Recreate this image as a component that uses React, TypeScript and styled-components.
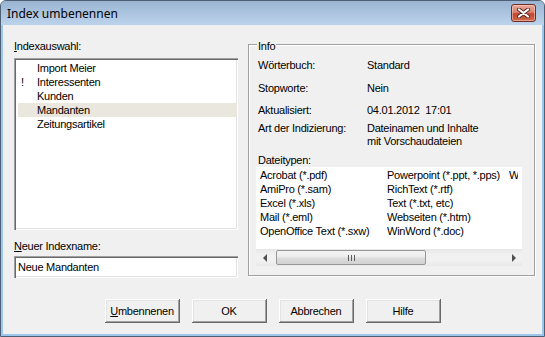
import React from 'react';
import styled, { createGlobalStyle } from 'styled-components';

const GlobalStyle = createGlobalStyle`
  html, body {
    margin: 0;
    padding: 0;
    background: #fff;
  }
  body {
    font-family: "Liberation Sans", Arial, sans-serif;
    font-size: 11px;
    letter-spacing: -0.25px;
    color: #000;
  }
`;

const indexes = [
  { name: 'Import Meier' },
  { name: 'Interessenten', flag: '!' },
  { name: 'Kunden' },
  { name: 'Mandanten', selected: true },
  { name: 'Zeitungsartikel' },
];

const fileTypes = [
  'Acrobat (*.pdf)',
  'AmiPro (*.sam)',
  'Excel (*.xls)',
  'Mail (*.eml)',
  'OpenOffice Text (*.sxw)',
  'Powerpoint (*.ppt, *.pps)',
  'RichText (*.rtf)',
  'Text (*.txt, etc)',
  'Webseiten (*.htm)',
  'WinWord (*.doc)',
  'W',
];

export default function App() {
  return (
    <>
      <GlobalStyle />
      <Window>
        <TitleBar>
          <Title>Index umbenennen</Title>
          <CloseButton>
            <svg width='13' height='10' viewBox='0 0 13 10'>
              <path d='M2 1.5 L11 8.5 M11 1.5 L2 8.5' stroke='#5a2a24' strokeWidth='4' strokeLinecap='round' />
              <path d='M2 1.5 L11 8.5 M11 1.5 L2 8.5' stroke='#fff' strokeWidth='2.2' strokeLinecap='round' />
            </svg>
          </CloseButton>
        </TitleBar>
        <Client>
          <Main>
            <LeftColumn>
              <FieldLabel><u>I</u>ndexauswahl:</FieldLabel>
              <ListBox>
                {indexes.map((item) => (
                  <ListRow key={item.name} $selected={!!item.selected}>
                    <Marker>{item.flag}</Marker>
                    {item.name}
                  </ListRow>
                ))}
              </ListBox>
              <FieldLabel $top={10}><u>N</u>euer Indexname:</FieldLabel>
              <NameInput defaultValue='Neue Mandanten' />
            </LeftColumn>
            <GroupBox>
              <Legend>Info</Legend>
              <InfoRow $top={0}>
                <span>Wörterbuch:</span>
                <span>Standard</span>
              </InfoRow>
              <InfoRow $top={10}>
                <span>Stopworte:</span>
                <span>Nein</span>
              </InfoRow>
              <InfoRow $top={9}>
                <span>Aktualisiert:</span>
                <span>04.01.2012&nbsp;&nbsp;17:01</span>
              </InfoRow>
              <InfoRow $top={5}>
                <span>Art der Indizierung:</span>
                <span>
                  Dateinamen und Inhalte
                  <br />
                  mit Vorschaudateien
                </span>
              </InfoRow>
              <SubLabel>Dateitypen:</SubLabel>
              <FileList>
                <FileGrid>
                  {fileTypes.map((t) => (
                    <FileItem key={t}>{t}</FileItem>
                  ))}
                </FileGrid>
                <HScroll>
                  <ArrowButton>
                    <Arrow $dir='left' />
                  </ArrowButton>
                  <Track>
                    <Thumb>
                      <Grip />
                      <Grip />
                      <Grip />
                    </Thumb>
                  </Track>
                  <ArrowButton>
                    <Arrow $dir='right' />
                  </ArrowButton>
                </HScroll>
              </FileList>
            </GroupBox>
          </Main>
          <ButtonRow>
            <Button><u>U</u>mbennenen</Button>
            <Button>OK</Button>
            <Button>Abbrechen</Button>
            <Button>Hilfe</Button>
          </ButtonRow>
        </Client>
      </Window>
    </>
  );
}

const Window = styled.div`
  width: 545px;
  height: 337px;
  box-sizing: border-box;
  border: 1px solid #4c5f75;
  border-radius: 6px 6px 0 0;
  background: #9cc6ec;
  display: flex;
  flex-direction: column;
  overflow: hidden;
`;

const TitleBar = styled.div`
  height: 24px;
  flex: none;
  display: flex;
  align-items: center;
  justify-content: space-between;
  padding: 0 8px 0 6px;
  background: linear-gradient(#9ab4d2, #bcd3ec);
`;

const Title = styled.div`
  font-family: "Noto Sans", "Liberation Sans", sans-serif;
  font-size: 12px;
  letter-spacing: 0;
  color: #000;
  padding-top: 1px;
`;

const CloseButton = styled.div`
  width: 25px;
  height: 18px;
  box-sizing: border-box;
  border: 1px solid #6e2c24;
  border-radius: 3px;
  background: linear-gradient(#e9a899 0%, #d98371 45%, #c2452e 55%, #cf6a4c 100%);
  box-shadow: inset 0 0 0 1px rgba(255, 220, 210, 0.5);
  display: flex;
  align-items: center;
  justify-content: center;
`;

const Client = styled.div`
  flex: 1;
  margin: 0 2px 2px 2px;
  background: #f0f0f0;
  display: flex;
  flex-direction: column;
`;

const Main = styled.div`
  display: flex;
  align-items: flex-start;
  gap: 10px;
  padding: 15px 0 0 11px;
`;

const LeftColumn = styled.div`
  width: 224px;
  display: flex;
  flex-direction: column;
`;

const FieldLabel = styled.div<{ $top?: number }>`
  line-height: 13px;
  margin-top: ${(p) => p.$top ?? 0}px;
  margin-bottom: ${(p) => (p.$top ? 3 : 5)}px;
`;

const sunken = `
  box-shadow: inset 1px 1px #a0a0a0, inset 2px 2px #696969,
    inset -1px -1px #fff, inset -2px -2px #e3e3e3;
`;

const ListBox = styled.div`
  height: 172px;
  box-sizing: border-box;
  background: #fff;
  ${sunken}
  padding: 3px 1px 2px 4px;
`;

const ListRow = styled.div<{ $selected: boolean }>`
  display: flex;
  height: 14px;
  line-height: 14px;
  background: ${(p) => (p.$selected ? '#e9e7de' : 'transparent')};
`;

const Marker = styled.span`
  width: 16px;
  padding-left: 3px;
`;

const NameInput = styled.input`
  height: 22px;
  box-sizing: border-box;
  border: none;
  outline: none;
  background: #fff;
  ${sunken}
  padding: 0 4px;
  font-family: "Liberation Sans", Arial, sans-serif;
  font-size: 11px;
  letter-spacing: -0.25px;
  color: #000;
`;

const GroupBox = styled.div`
  position: relative;
  width: 287px;
  height: 232px;
  box-sizing: border-box;
  margin-top: 4px;
  border: 1px solid #a0a0a0;
  box-shadow: inset 1px 1px #fff, 1px 1px #fff;
  padding: 14px 0 0 7px;
`;

const Legend = styled.div`
  position: absolute;
  top: -5px;
  left: 8px;
  padding: 0 1px;
  line-height: 13px;
  background: #f0f0f0;
`;

const InfoRow = styled.div<{ $top: number }>`
  display: grid;
  grid-template-columns: 109px 1fr;
  line-height: 13px;
  padding-left: 2px;
  margin-top: ${(p) => p.$top}px;
`;

const SubLabel = styled.div`
  line-height: 13px;
  padding-left: 2px;
  margin-top: 6px;
`;

const FileList = styled.div`
  width: 266px;
  height: 99px;
  background: #fff;
  display: flex;
  flex-direction: column;
  overflow: hidden;
`;

const FileGrid = styled.div`
  flex: 1;
  display: grid;
  grid-template-rows: repeat(5, 14px);
  grid-auto-flow: column;
  grid-template-columns: 127px 122px 9px;
  line-height: 14px;
  white-space: nowrap;
  padding: 1px 0 0 4px;
  overflow: hidden;
`;

const FileItem = styled.span`
  overflow: hidden;
`;

const HScroll = styled.div`
  height: 17px;
  flex: none;
  display: flex;
  background: linear-gradient(#e6e6e6, #f1f1f1 30%, #f1f1f1 70%, #e8e8e8);
`;

const ArrowButton = styled.div`
  width: 17px;
  display: flex;
  align-items: center;
  justify-content: center;
`;

const Arrow = styled.div<{ $dir: 'left' | 'right' }>`
  width: 0;
  height: 0;
  border-top: 4px solid transparent;
  border-bottom: 4px solid transparent;
  ${(p) => (p.$dir === 'left' ? 'border-right: 4px solid #505050;' : 'border-left: 4px solid #505050;')}
`;

const Track = styled.div`
  flex: 1;
  display: flex;
  align-items: center;
  padding-left: 3px;
`;

const Thumb = styled.div`
  width: 150px;
  height: 15px;
  box-sizing: border-box;
  border: 1px solid #979797;
  border-radius: 2px;
  background: linear-gradient(#f4f4f4, #ececec 45%, #dcdcdc 55%, #d2d2d2);
  display: flex;
  align-items: center;
  justify-content: center;
  gap: 2px;
`;

const Grip = styled.div`
  width: 1px;
  height: 6px;
  background: #5c5c5c;
`;

const ButtonRow = styled.div`
  display: flex;
  justify-content: center;
  gap: 12px;
  margin-top: 21px;
`;

const Button = styled.button`
  width: 75px;
  height: 24px;
  border: none;
  padding: 0;
  background: #f0f0f0;
  box-shadow: inset -1px -1px #696969, inset 1px 1px #fff,
    inset -2px -2px #a0a0a0, inset 2px 2px #e3e3e3;
  font-family: "Liberation Sans", Arial, sans-serif;
  font-size: 11px;
  letter-spacing: -0.25px;
  color: #000;
`;
